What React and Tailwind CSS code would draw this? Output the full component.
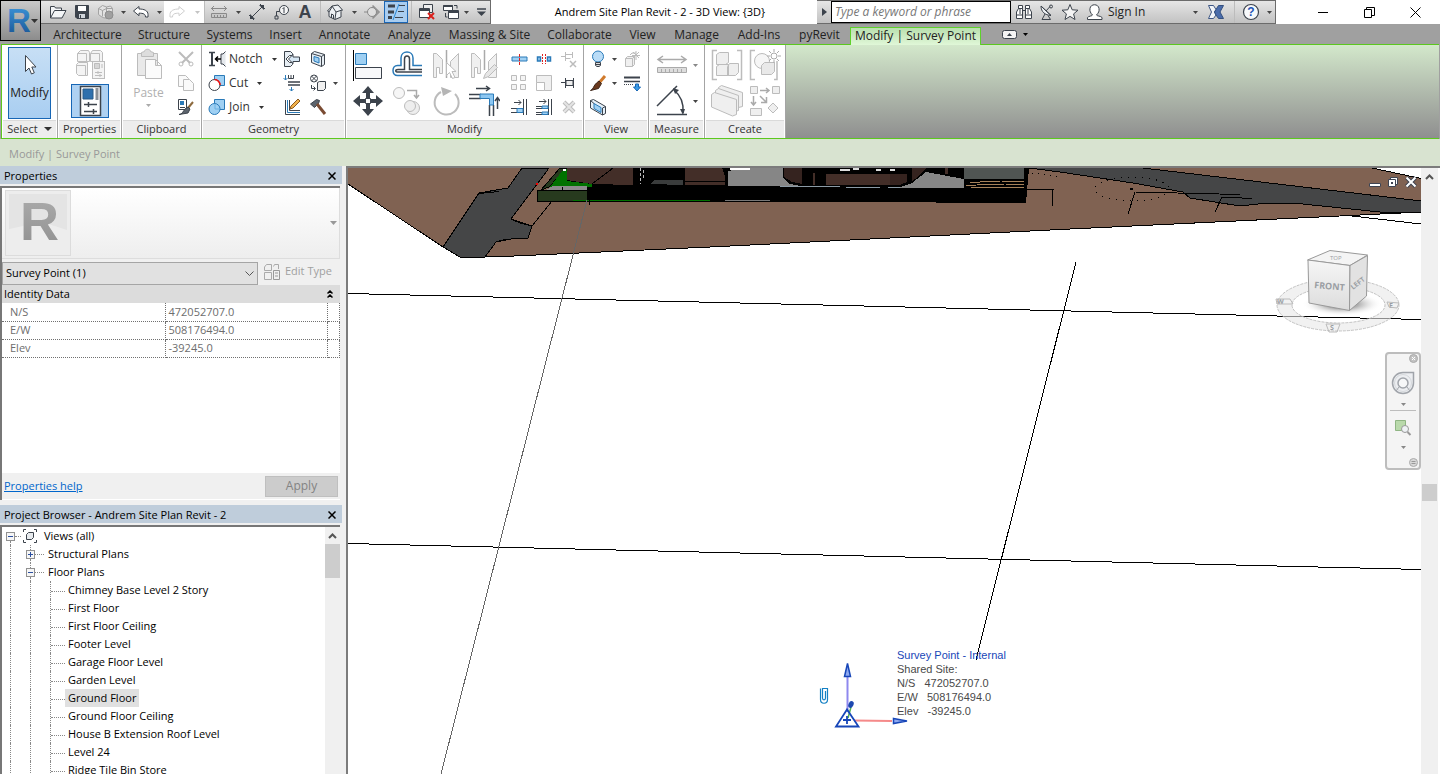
import React, { useState } from "react";

const tabs = [
  { name: "Architecture", width: "w-[85px]" },
  { name: "Structure", width: "w-[68px]" },
  { name: "Systems", width: "w-[63px]" },
  { name: "Insert", width: "w-[49px]" },
  { name: "Annotate", width: "w-[69px]" },
  { name: "Analyze", width: "w-[61px]" },
  { name: "Massing & Site", width: "w-[99px]" },
  { name: "Collaborate", width: "w-[81px]" },
  { name: "View", width: "w-[45px]" },
  { name: "Manage", width: "w-[63px]" },
  { name: "Add-Ins", width: "w-[62px]" },
  { name: "pyRevit", width: "w-[59px]" },
];

const properties = [
  { name: "N/S", value: "472052707.0" },
  { name: "E/W", value: "508176494.0" },
  { name: "Elev", value: "-39245.0" },
];

const floorPlans = [
  "Chimney Base Level 2 Story",
  "First Floor",
  "First Floor Ceiling",
  "Footer Level",
  "Garage Floor Level",
  "Garden Level",
  "Ground Floor",
  "Ground Floor Ceiling",
  "House B Extension Roof Level",
  "Level 24",
  "Ridge Tile Bin Store",
];

function Svg({ w = 18, h = w, className = "", children }) {
  return (
    <svg width={w} height={h} viewBox={`0 0 ${w} ${h}`} fill="none" stroke="#3c434c" className={`shrink-0 ${className}`} aria-hidden="true">
      {children}
    </svg>
  );
}

function Caret({ className = "text-[#444]" }) {
  return (
    <svg width="5" height="3" viewBox="0 0 5 3" className={`shrink-0 ${className}`} aria-hidden="true">
      <path d="M0 0h5L2.5 3z" fill="currentColor" />
    </svg>
  );
}

function Tool({ label, className = "", children }) {
  return (
    <button aria-label={label} className={`flex shrink-0 items-center justify-center ${className}`}>
      {children}
    </button>
  );
}

function Divider() {
  return <span className="ml-[3px] h-full w-px shrink-0 bg-[#bcbcbc]" />;
}

/* ---------- quick access toolbar ---------- */

function QuickAccess() {
  return (
    <div className="flex h-6 w-[450px] shrink-0 items-stretch border-t border-b border-r border-[#6b6b6b] bg-linear-to-b from-[#e6e6e6] to-[#c2c2c2] pl-[5px]">
      <Tool label="Open" className="w-6">
        <Svg>
          <path d="M1.500 15V3.500h4l1 1.500h6v2.500M1.500 15l4-7.500h11.500L13 15z" fill="#f3f5f7" />
        </Svg>
      </Tool>
      <Tool label="Save" className="w-6">
        <Svg>
          <path d="M2.500 2.500h13v13h-11.500l-1.500-1.500z" fill="#3c434c" />
          <path d="M5 3h8v5H5z" fill="#fff" stroke="none" />
          <path d="M6 11h6v4H6z" fill="#cfd4da" stroke="none" />
          <path d="M7.500 12v3" />
        </Svg>
      </Tool>
      <Tool label="Synchronize" className="w-6">
        <Svg>
          <path d="M1.500 5.500l4-3 4 1.500 4-1 2 2.500v6l-5 4-5-1-4-3z" fill="#e2e2e2" stroke="#a3a3a3" />
          <path d="M1.500 5.500l4 2 4-2 6 0M5.500 7.500v6M9.500 4v10" stroke="#a3a3a3" />
          <circle cx="12" cy="12" r="4" fill="#a0a0a0" stroke="#8d8d8d" />
        </Svg>
      </Tool>
      <Tool label="Synchronize options" className="w-[10px]"><Caret /></Tool>
      <Tool label="Undo" className="w-[26px]">
        <Svg>
          <path d="M1.500 8L7 3.500V6c5 0 9 1.500 9 5.500v2.500h-2.500c0-3-2-3.800-6.500-3.800v2.500z" fill="#fff" />
        </Svg>
      </Tool>
      <Tool label="Undo options" className="w-[10px]"><Caret /></Tool>
      <Tool label="Redo" className="w-[26px] bg-white">
        <Svg>
          <path d="M16.500 8L11 3.500V6c-5 0-9 1.500-9 5.500v2.500h2.500c0-3 2-3.800 6.500-3.800v2.500z" stroke="#cfcfcf" />
        </Svg>
      </Tool>
      <Tool label="Redo options" className="w-[14px] bg-white"><Caret className="text-[#c4c4c4]" /></Tool>
      <span className="w-px shrink-0 bg-[#bcbcbc]" />
      <Tool label="Measure" className="w-7">
        <Svg>
          <path d="M1 5.500h16M4 3L1.500 5.500 4 8M14 3l2.500 2.500L14 8" stroke="#8a8a8a" />
          <path d="M1.500 10.500h15v4h-15zM4.500 12v2M7.500 12v2M10.500 12v2M13.500 12v2" stroke="#8a8a8a" fill="#c9c9c9" />
        </Svg>
      </Tool>
      <Tool label="Measure options" className="w-[10px]"><Caret /></Tool>
      <Tool label="Aligned Dimension" className="w-7">
        <Svg>
          <path d="M4 14L14 4" />
          <path d="M2 16v-5l5 5zM16 2v5l-5-5z" fill="#3c434c" stroke="none" />
          <path d="M1 12l5 5M12 1l5 5" />
        </Svg>
      </Tool>
      <Tool label="Tag by Category" className="w-[22px]">
        <Svg>
          <path d="M3.500 13V8.500H7" />
          <path d="M2 13h3v3H2z" />
          <circle cx="11" cy="7" r="4.500" fill="#f6f6f6" />
          <path d="M9.500 6L11 4.500V10" />
        </Svg>
      </Tool>
      <Tool label="Text" className="w-6 text-[#3c434c]">
        <span className="font-['Liberation_Sans',sans-serif] text-[18px] leading-5 font-bold">A</span>
      </Tool>
      <Divider />
      <Tool label="Default 3D View" className="w-7">
        <Svg>
          <path d="M1.500 8L6 3l6-1 4.500 5L15 8.500V14l-6 2.500-6-3V9z" fill="#eef1f4" />
          <path d="M6 3l4 6-1 7M10 9l6-2M3 9l3-5M5.500 15v-4l2 1v4" />
        </Svg>
      </Tool>
      <Tool label="3D view options" className="w-[10px]"><Caret /></Tool>
      <Tool label="Section" className="w-[25px]">
        <Svg>
          <path d="M1 9h3" stroke="#888" />
          <path d="M10 2.500L16.500 9 10 15.500z" fill="#999" stroke="#888" />
          <circle cx="9" cy="9" r="4.500" fill="#dedede" stroke="#888" />
        </Svg>
      </Tool>
      <Tool label="Thin Lines" className="w-6 border border-[#1b66b5] bg-[#a9cdf0]">
        <Svg>
          <path d="M1 3h7M1 9h6M1 14.500h4" strokeWidth="3" />
          <path d="M12 2.500h6M11 8.500h6M8 14.500h8" />
          <path d="M12 1L6 17" stroke="#2a8ad8" />
        </Svg>
      </Tool>
      <Divider />
      <Tool label="Close Inactive Views" className="w-[30px]">
        <Svg>
          <path d="M5.500 6V1.500h9v8H12" fill="#eee" />
          <path d="M1.500 5.500h10v9h-10z" fill="#fff" />
          <path d="M1.500 7h10" strokeWidth="2" />
          <path d="M10 10l6 6M16 10l-6 6" stroke="#d9201c" strokeWidth="2" />
        </Svg>
      </Tool>
      <Tool label="Switch Windows" className="w-[18px]">
        <Svg>
          <path d="M1.500 2.500h9v5h-9z" fill="#fff" />
          <path d="M6.500 7.500h10v8h-10z" fill="#fff" />
          <path d="M1.500 3h9M6.500 9h10" strokeWidth="2" />
          <path d="M12 2.500h3v3M3.500 10v4h2" />
        </Svg>
      </Tool>
      <Tool label="Switch window options" className="w-3"><Caret /></Tool>
      <Tool label="Customize" className="w-[18px]">
        <Svg w={9} h={8}>
          <path d="M0 1h9" strokeWidth="1.500" />
          <path d="M0 3.500h9L4.500 8z" fill="#3c434c" stroke="none" />
        </Svg>
      </Tool>
    </div>
  );
}

function InfoCenter() {
  return (
    <div className="flex h-6 w-[459px] shrink-0 items-stretch border-t border-b border-r border-[#6b6b6b] bg-linear-to-b from-[#e6e6e6] to-[#c2c2c2]">
      <Tool label="Collapse search" className="w-[14px]">
        <Svg w={5} h={8}>
          <path d="M0 0l5 4-5 4z" fill="#3c434c" stroke="none" />
        </Svg>
      </Tool>
      <input
        aria-label="Search"
        placeholder="Type a keyword or phrase"
        className="w-[180px] shrink-0 border border-black bg-white px-[3px] text-[12px] leading-4 italic placeholder-[#777]"
      />
      <Tool label="Search" className="w-[26px]">
        <Svg>
          <path d="M3.500 6V2.500h4V6M10.500 6V2.500h4V6" fill="#fff" />
          <path d="M1.500 15.500V9l2-3.500h4v10zM10.500 15.500v-10h4l2 3.500v6.500z" fill="#fff" />
          <path d="M7.500 7.500h3M1.500 12h6M10.500 12h6M5 6v5M13 6v5" />
        </Svg>
      </Tool>
      <Tool label="Communication Center" className="w-5">
        <Svg>
          <path d="M3 3c0 6 4 9 10 9.500z" fill="#eef1f4" />
          <path d="M3 3l10 9.500M8 8l4-4.500" />
          <circle cx="13" cy="3.500" r="1.500" />
          <path d="M7 11l-3 5.500h8.500L10 12.500" />
        </Svg>
      </Tool>
      <Tool label="Favorites" className="w-[26px]">
        <Svg>
          <path d="M9 1.500l2.200 5.300 5.800.4-4.400 3.700 1.400 5.600L9 13.400l-5 3.100 1.400-5.600L1 7.200l5.800-.4z" fill="#f4f4f4" />
        </Svg>
      </Tool>
      <button className="flex w-[106px] shrink-0 items-center gap-1 pl-[3px] text-[12px] whitespace-nowrap text-[#222]">
        <Svg>
          <path d="M1.500 16.500v-2c1-1.500 5-1.500 5-2.500-2-2-3-4-2.500-6.500.5-5 8.500-5 9 0 .5 2.500-.5 4.500-2.500 6.500 0 1 4.500 1 5.500 2.500v2z" fill="#fff" />
        </Svg>
        Sign In
      </button>
      <Tool label="Account menu" className="w-3"><Caret /></Tool>
      <Tool label="App Store" className="w-[30px]">
        <Svg>
          <path d="M1.500 2.500h5L9 6.500l-1.500 2.500L9 12l-2.500 3.500h-5L4.500 9z" fill="#f1f4f8" stroke="#3d5685" />
          <path d="M16.500 2.500h-5L9 6.500 7.500 9 9 12l2.500 3.500h5L13 9z" fill="#4a6cab" stroke="#34507f" />
        </Svg>
      </Tool>
      <Divider />
      <Tool label="Help" className="ml-1 w-6">
        <Svg>
          <circle cx="9" cy="9" r="7.500" fill="#f7f9fb" strokeWidth="1.200" />
          <text x="9" y="13" textAnchor="middle" fontSize="12" fontWeight="700" fill="#2353b5" stroke="none" fontFamily="Liberation Sans, sans-serif">?</text>
        </Svg>
      </Tool>
      <Tool label="Help options" className="w-3"><Caret /></Tool>
    </div>
  );
}

function TitleBar() {
  return (
    <div className="flex h-6 bg-white pl-[41px]">
      <QuickAccess />
      <div className="flex min-w-0 flex-1 items-center justify-center pl-3 text-[11px] whitespace-nowrap text-black">
        Andrem Site Plan Revit - 2 - 3D View: &#123;3D&#125;
      </div>
      <InfoCenter />
      <div className="flex pr-[2px] pl-6">
        <Tool label="Minimize" className="w-[46px]">
          <Svg w={11}><path d="M0 5.500h10" stroke="#000" /></Svg>
        </Tool>
        <Tool label="Restore" className="w-[46px]">
          <Svg w={11}><path d="M.5 2.500h7v8h-7zM2.500 2.500v-2h8v8h-3" stroke="#000" /></Svg>
        </Tool>
        <Tool label="Close" className="w-[46px]">
          <Svg w={11}><path d="M.5.5l10 10M10.500.5l-10 10" stroke="#000" /></Svg>
        </Tool>
      </div>
    </div>
  );
}

function TabRow() {
  return (
    <div className="flex h-5 items-stretch bg-[#a0a0a0] pl-[45px] text-[12px] text-[#222]">
      {tabs.map((tab) => (
        <button key={tab.name} className={`flex shrink-0 items-center justify-center pt-[2px] whitespace-nowrap ${tab.width}`}>
          {tab.name}
        </button>
      ))}
      <button className="mt-[3px] -mb-px ml-px flex w-[131px] shrink-0 items-center justify-center border border-b-0 border-[#5fd12c] bg-linear-to-b from-[#b9dfae] to-[#e0f7d8] pb-[2px] whitespace-nowrap">
        Modify | Survey Point
      </button>
      <Tool label="Ribbon display" className="ml-[21px] gap-[6px]">
        <Svg w={15} h={9}>
          <rect x=".5" y=".5" width="14" height="8" rx="2" fill="#f4f4f4" />
          <path d="M5 6l2.500-3L10 6z" fill="#3c434c" stroke="none" />
        </Svg>
        <Caret className="text-black" />
      </Tool>
    </div>
  );
}

/* ---------- ribbon ---------- */

function Panel({ title, className = "", pad = "px-[6px]", menu, children }) {
  return (
    <section className={`flex shrink-0 flex-col border-r border-[#a4a4a4] bg-white ${className}`}>
      <div className={`flex flex-1 pt-[2px] ${pad}`}>{children}</div>
      <h2 className="mx-px flex h-[18px] items-center justify-center gap-[6px] border-t border-[#dadada] bg-[#ededed] pb-px text-[11px] text-[#333]">
        {title}
        {menu && (
          <Svg w={8} h={4}><path d="M0 0h8L4 4z" fill="#333" stroke="none" /></Svg>
        )}
      </h2>
    </section>
  );
}

function GhostFamily() {
  return (
    <Svg w={32}>
      <g fill="#f4f4f4" stroke="#bdbdbd">
        <path d="M3.500 5.500l3-3h8l1 2v9h-12zM16.500 5.500l2-3h8l2 2v9h-12zM2.500 16.500l2-2h9v13h-9l-2-2z" />
        <path d="M3.500 5.500h9v8M16.500 5.500h9v8M2.500 17.500h9v10" />
        <rect x="18.500" y="13.500" width="12" height="17" />
        <path d="M20.500 15.500h5v5h-5z" fill="#d6d6d6" />
        <path d="M28 16v4M21 24.500h7M24 23v3M21 27.500h7M26 26v3" />
      </g>
    </Svg>
  );
}

const gray = "#bcbcbc";
const blue = "#2a7ab8";
const sky = "#9fd0f3";

function Ribbon() {
  return (
    <div className="flex h-[95px] items-stretch border-t border-b border-l border-[#5cc81e] bg-linear-to-b from-[#d3e8cb] to-[#8f8f8f]">
      <Panel title="Select" menu className="w-14">
        <button className="flex h-[72px] w-11 flex-col items-center border border-[#1766b5] bg-linear-to-b from-[#c7dff5] to-[#a9cef1] pt-[6px] text-[12px] text-[#222]">
          <Svg w={14} h={22}>
            <path d="M2.500 1.500v16l3.500-3.500 2.500 6 2.800-1.200-2.500-5.800H13z" fill="#fff" />
          </Svg>
          <span className="mt-[9px] leading-4">Modify</span>
        </button>
      </Panel>

      <Panel title="Properties" className="w-16">
        <div className="flex flex-1 flex-col items-center gap-[4px] pt-px">
          <Tool label="Type Properties"><GhostFamily /></Tool>
          <Tool label="Properties" className="h-[34px] w-[38px] border border-[#1766b5] bg-[#aed1f2]">
            <Svg w={32}>
              <rect x="6.500" y="1.500" width="20" height="29" fill="#fff" strokeWidth="1.500" />
              <path d="M9 4h10v10H9z" fill="#2f70ad" stroke="#2b5a86" />
              <path d="M23 3v12" stroke="#8c9197" strokeWidth="3" />
              <path d="M10 19.500h13M10 26.500h13M14.500 17v5M19.500 24v5" strokeWidth="1.500" />
            </Svg>
          </Tool>
        </div>
      </Panel>

      <Panel title="Clipboard" className="w-20">
        <button className="flex w-[42px] flex-col items-center text-[12px] text-[#b0b0b0]">
          <Svg w={32} h={36}>
            <g stroke={gray} fill="#f1f1f1">
              <path d="M4.500 6.500h20v22h-20z" fill="#e9e9e9" />
              <path d="M8.500 5.500l3-1c0-3 6-3 6 0l3 1v4h-12z" fill="#ddd" />
              <path d="M12.500 12.500h10l6 6v13h-16zM22.500 12.500v6h6" fill="#fbfbfb" />
            </g>
          </Svg>
          <span className="mt-[2px] leading-4">Paste</span>
          <Caret className="mt-[3px] text-[#aaa]" />
        </button>
        <div className="ml-2 flex flex-col gap-[6px] pt-[3px]">
          <Tool label="Cut to Clipboard">
            <Svg>
              <path d="M2 2l11 11M16 2L5 13" stroke={gray} strokeWidth="2" />
              <circle cx="4" cy="14" r="2" stroke={gray} />
              <circle cx="14" cy="14" r="2" stroke={gray} />
            </Svg>
          </Tool>
          <Tool label="Copy to Clipboard">
            <Svg>
              <path d="M1.500 1.500h7l3 3v8h-10z" stroke={gray} fill="#fafafa" />
              <path d="M6.500 5.500h6l4 4v7h-10z" stroke={gray} fill="#fafafa" />
            </Svg>
          </Tool>
          <Tool label="Match Type Properties">
            <Svg>
              <path d="M1.500 1.500h8v10h-8z" fill="#fff" />
              <path d="M3 3h4v4H3z" fill={blue} stroke="none" />
              <path d="M3 9.500h5" />
              <path d="M16 4l-5 6" stroke="#8d6a3e" strokeWidth="2" />
              <path d="M11 9l2 2-2 4-9 1.500c3 0 4-3 6-5.500z" fill="#5c646d" />
            </Svg>
          </Tool>
        </div>
      </Panel>

      <Panel title="Geometry" className="w-36">
        <div className="flex w-[73px] shrink-0 flex-col gap-[6px] pt-[3px] text-[12px] leading-[18px] text-[#333]">
          <button className="flex items-center gap-[3px]">
            <Svg>
              <path d="M1 2.500h6M1 15.500h6" strokeWidth="1.500" />
              <path d="M4 3v12" strokeWidth="2" />
              <path d="M17.500 1.500L15 4h-2v10h2l2.500 2.500" fill="#e4e8ec" />
              <path d="M13 9H8M10 6.500L7.500 9l2.500 2.500" stroke="#000" strokeWidth="1.500" />
            </Svg>
            Notch
            <Caret className="ml-[6px]" />
          </button>
          <button className="flex items-center gap-[3px]">
            <Svg>
              <path d="M6.500 1.500h10v10h-10z" fill={sky} stroke={blue} />
              <circle cx="6.500" cy="11" r="5.500" fill="#fff" />
              <path d="M6.500 5.500a5.500 5.500 0 0 1 5.500 5.500" stroke="#e11" strokeWidth="1.500" />
            </Svg>
            Cut
            <Caret className="ml-[6px]" />
          </button>
          <button className="flex items-center gap-[3px]">
            <Svg>
              <path d="M6.500 1.500h10v10h-10z" fill={sky} stroke={blue} />
              <circle cx="6.500" cy="11" r="5.500" fill={sky} stroke={blue} />
              <path d="M7 6v5h5" stroke="#6bb0e0" />
            </Svg>
            Join
            <Caret className="ml-[6px]" />
          </button>
        </div>
        <div className="ml-[2px] flex flex-col gap-[6px] pt-[3px]">
          <Tool label="Cope">
            <Svg>
              <path d="M1.500 1.500h6l2 2v2h-3L3 9l3.500 3.500h3v2l-2 2h-6z" fill="#e7eef4" />
              <path d="M5.500 9L10 4.500v2.500h6.500v4.500H10v2z" fill="#d6e6f3" />
            </Svg>
          </Tool>
          <Tool label="Wall Joins">
            <Svg>
              <path d="M2.500 1v5M.5 4l2 2 2-2M8.500 17v-4M6.500 15l2 2 2-2" stroke={blue} />
              <path d="M5.500 1v3.500h5V1M8 1v3.500" />
              <path d="M5 8h12M5 11h12" strokeWidth="1.500" />
            </Svg>
          </Tool>
          <Tool label="Split Face">
            <Svg>
              <path d="M2.500 2v14.500H17M6.500 2v10.500H17" />
              <path d="M4.500 2v12.500H17" stroke={blue} />
              <path d="M7 11l1-3 7-7 2 2-7 7z" fill="#f2b24b" stroke="#8d5a1e" />
            </Svg>
          </Tool>
        </div>
        <div className="ml-2 flex flex-col gap-[6px] pt-[3px]">
          <Tool label="Paint">
            <Svg>
              <path d="M2.500 3.500l3-2 10 3v10l-3 2-10-4z" fill="#e7eef4" />
              <path d="M2.500 3.500l10 3v10M12.500 6.500l3-2" />
              <path d="M5 6.500l5 1.500v5l-5-2z" fill={sky} stroke={blue} />
            </Svg>
          </Tool>
          <Tool label="Beam Joins">
            <Svg>
              <circle cx="5" cy="4.500" r="3.500" />
              <path d="M2.500 2l5 5M7.500 2l-5 5M2.500 11v3.500H6M4.500 12.500l2 2-2 2" />
              <path d="M8.500 8.500l2-1h6v7l-2 2h-6z" fill="#f0f0f0" />
            </Svg>
          </Tool>
          <Tool label="Demolish">
            <Svg>
              <path d="M1.500 6l6-4.500 3 1-1 3-4 4z" fill="#5c646d" />
              <path d="M8 6l8 10" stroke="#7a4b32" strokeWidth="3" />
            </Svg>
          </Tool>
        </div>
        <Tool label="More geometry" className="ml-[2px] h-3 w-3 self-center"><Caret /></Tool>
      </Panel>

      <Panel title="Modify" className="w-[238px]" pad="px-[2px]">
        <div className="grid grid-cols-[39px_39px_39px_38px] grid-rows-[36px_36px]">
          <Tool label="Align">
            <Svg w={32}>
              <path d="M1.500 1v31" stroke="#000" />
              <path d="M3.500 4.500h11v11h-11z" fill={sky} stroke={blue} />
              <path d="M3.500 18.500h26v11h-26z" fill="#f7f8fa" />
            </Svg>
          </Tool>
          <Tool label="Offset">
            <Svg w={32}>
              <path d="M31 16.500h-9V9c0-8-12-8-12 0v7.500H6.500c-6 0-6 10 0 10H31" stroke={blue} strokeWidth="1.500" />
              <path d="M31 20.500H18.500V10c0-4-5-4-5 0v10.500H7c-3 0-3 2.500 0 2.500h24" strokeWidth="1.500" />
            </Svg>
          </Tool>
          <Tool label="Mirror - Pick Axis">
            <Svg w={32}>
              <path d="M3.500 4.500h3l6 6v14h-3v-6h-3v10h-3zM28.500 4.500l-8 8v16h8z" stroke={gray} fill="#f0f0f0" />
              <path d="M16.500 1v28" stroke="#aaa" strokeWidth="1.500" />
              <path d="M16.500 13.500v13l3-3 3 6 2.500-1-3-6h4z" fill="#fff" stroke={gray} />
            </Svg>
          </Tool>
          <Tool label="Mirror - Draw Axis">
            <Svg w={32}>
              <path d="M3.500 4.500h3l6 6v14h-3v-6h-3v10h-3zM28.500 4.500l-8 8v16h8z" stroke={gray} fill="#f0f0f0" />
              <path d="M16.500 1v20" stroke="#aaa" strokeWidth="1.500" />
              <path d="M15.500 29.500l2-5 9-9 3 3-9 9z" fill="#e6e6e6" stroke={gray} />
            </Svg>
          </Tool>
          <Tool label="Move">
            <Svg w={32}>
              <path d="M16 1l6 7h-4v5h-4V8h-4zM16 31l6-7h-4v-5h-4v5h-4zM1 16l7-6v4h5v4H8v4zM31 16l-7-6v4h-5v4h5v4z" fill="#3c434c" stroke="none" />
              <path d="M13.500 13.500h5v5h-5z" fill="#fff" />
            </Svg>
          </Tool>
          <Tool label="Copy">
            <Svg w={32}>
              <circle cx="8" cy="8" r="5.500" stroke={gray} fill="#f6f6f6" />
              <circle cx="22" cy="23" r="6.500" stroke={gray} fill="#eee" />
              <circle cx="19" cy="21" r="5.500" stroke={gray} fill="#eee" />
              <path d="M16 5.500h9.500V12M23 10l2.500 3 2.500-3" stroke="#aaa" strokeWidth="1.500" />
            </Svg>
          </Tool>
          <Tool label="Rotate">
            <Svg w={32}>
              <path d="M11 7A12 12 0 1 0 25 9" stroke={gray} strokeWidth="2" />
              <path d="M11 2l11 4-9 5z" fill="#b5b5b5" stroke="none" />
            </Svg>
          </Tool>
          <Tool label="Trim/Extend to Corner">
            <Svg w={32}>
              <path d="M1 9.500h12M1 13.500h12M21.500 20v11M25.500 20v11" strokeWidth="1.500" />
              <path d="M12 9h13.500v11h-4v-6.500H12z" fill="#8cc7f2" stroke={blue} />
              <path d="M8 3.500h13M18 1l3.500 2.500L18 6M29.500 24V13M27 16l2.500-3.500L32 16" strokeWidth="1.500" />
            </Svg>
          </Tool>
        </div>
        <div className="ml-[3px] grid grid-cols-[25px_25px_25px] grid-rows-[24px_24px_24px]">
          <Tool label="Split Element">
            <Svg>
              <path d="M2 7h15v4H2z" fill={sky} stroke={blue} />
              <path d="M9.500 4v11" stroke="#d22" strokeDasharray="3 1" />
            </Svg>
          </Tool>
          <Tool label="Split with Gap">
            <Svg>
              <path d="M2.500 7h3v4h-3zM12.500 7h3v4h-3z" fill={sky} stroke={blue} strokeWidth="1.500" />
              <path d="M7.500 4v10M10.500 4v10" stroke="#d22" strokeDasharray="2 1" />
            </Svg>
          </Tool>
          <Tool label="Unpin">
            <Svg>
              <path d="M1 6.500h4M5.500 2v9M5.500 4.500h7M5.500 8.500h5M12.500 2v6" stroke={gray} />
              <path d="M10 11l6 6M16 11l-6 6" stroke={gray} strokeWidth="1.500" />
            </Svg>
          </Tool>
          <Tool label="Array">
            <Svg>
              <path d="M1.500 1.500h5v5h-5zM10.500 1.500h5v5h-5zM1.500 10.500h5v5h-5zM10.500 10.500h5v5h-5z" stroke={gray} fill="#f4f4f4" />
            </Svg>
          </Tool>
          <Tool label="Scale">
            <Svg>
              <path d="M1.500 1.500h15v15h-7v-8h-8z" stroke={gray} fill="#f0f0f0" />
              <path d="M1.500 8.500h8v8h-8z" stroke={gray} fill="#fff" />
            </Svg>
          </Tool>
          <Tool label="Pin">
            <Svg>
              <path d="M1 8.500h4M5.500 4v10M13.500 4v10" />
              <path d="M6 6.500h7v5H6z" fill="#eee" />
            </Svg>
          </Tool>
          <Tool label="Trim/Extend Single Element">
            <Svg>
              <path d="M1 10.500h8M1 14.500h8M4 4.500h7M8.500 2L11 4.500 8.500 7M13.500 1v16M16.500 1v16" />
              <path d="M7 10.500h6v4H7z" fill={sky} stroke={blue} />
            </Svg>
          </Tool>
          <Tool label="Trim/Extend Multiple Elements">
            <Svg>
              <path d="M4 3.500h7M8.500 1L11 3.500 8.500 6M1 8.500h7M1 10.500h7M1 14.500h7M1 16.500h7M13.500 1v16M16.500 1v16" />
              <path d="M7 8h6v2.500H7zM7 14h6v2.500H7z" fill={sky} stroke={blue} />
            </Svg>
          </Tool>
          <Tool label="Delete">
            <Svg>
              <path d="M4 4l10 10M14 4L4 14" stroke={gray} strokeWidth="4" />
              <path d="M4 4l10 10M14 4L4 14" stroke="#e4e4e4" strokeWidth="2" />
            </Svg>
          </Tool>
        </div>
      </Panel>

      <Panel title="View" className="w-[65px]">
        <div className="grid grid-cols-[16px_16px_20px] grid-rows-[24px_24px_24px]">
          <Tool label="Hide in View">
            <Svg>
              <circle cx="9" cy="6.500" r="5.500" fill="#b9dcf7" stroke={blue} />
              <path d="M6.500 12.500h5v3l-1.500 1h-2l-1.500-1zM6.500 14.500h5" fill="#ddd" />
            </Svg>
          </Tool>
          <Tool label="Hide options"><Caret /></Tool>
          <Tool label="Displace Elements">
            <Svg>
              <path d="M2.500 8.500l2-2h7v8l-2 2h-7zM2.500 8.500h7v8M9.500 8.500l2-2M7 5l2-2h4" stroke={gray} fill="#f0f0f0" />
              <path d="M13 1v9M9 5.500h8M10 2l6 6M16 2l-6 6" stroke={gray} />
            </Svg>
          </Tool>
          <Tool label="Override Graphics">
            <Svg>
              <path d="M16 2l-6 7" stroke="#d07a2d" strokeWidth="3" />
              <path d="M10 7l2.500 2.500-3 5L1.500 16.500c3-1 3-5 6-7.500z" fill="#6b3a1e" stroke="#3c2417" />
            </Svg>
          </Tool>
          <Tool label="Override options"><Caret /></Tool>
          <Tool label="Linework">
            <Svg>
              <path d="M1 3.500h16" strokeWidth="2" />
              <path d="M1 7.500h16" strokeWidth="1.500" />
              <path d="M1 10.500h10" strokeDasharray="1 1" />
              <path d="M12.500 10h3v3h2L14 17l-3.500-4h2z" fill="#3a9be6" stroke="#1766b5" />
            </Svg>
          </Tool>
          <Tool label="Selection Box">
            <Svg>
              <path d="M1.500 2.500l3-1 12 7v7l-3 1.500-12-7z" fill="#e6f1fa" />
              <path d="M5 5.500l7 4v5l-7-4z" fill={sky} stroke={blue} />
              <path d="M1.500 2.500l3.500 3M13.500 10v7M13.500 10l3-1.500" />
            </Svg>
          </Tool>
        </div>
      </Panel>

      <Panel title="Measure" className="w-14">
        <div className="grid grid-cols-[33px_15px] grid-rows-[36px_36px]">
          <Tool label="Measure Between Two References">
            <Svg w={32}>
              <path d="M3 10.500h26M7 7l-5 3.500L7 14M25 7l5 3.500-5 3.500" stroke="#aaa" strokeWidth="1.500" />
              <path d="M1.500 18.500h29v5h-29zM5.500 20v3M9.500 20v3M13.500 20v3M17.500 20v3M21.500 20v3M25.500 20v3" stroke="#aaa" fill="#ddd" />
            </Svg>
          </Tool>
          <Tool label="Measure options"><Caret className="text-[#888]" /></Tool>
          <Tool label="Angular Dimension">
            <Svg w={32}>
              <path d="M1 21L21 1M1 29.500h30" strokeWidth="1.500" />
              <path d="M18 5c6 5 10 13 9 23" strokeWidth="1.500" />
              <path d="M17 3l6 2-4 4zM24 24h5l-2 6z" fill="#3c434c" stroke="none" />
            </Svg>
          </Tool>
          <Tool label="Dimension options"><Caret /></Tool>
        </div>
      </Panel>

      <Panel title="Create" className="w-[81px]" pad="px-[5px]">
        <div className="grid grid-cols-[34px_42px] grid-rows-[36px_36px]">
          <Tool label="Create Assembly">
            <Svg w={32}>
              <path d="M6 1.500H1.500v29H6M26 1.500h4.500v29H26" stroke={gray} strokeWidth="1.500" />
              <path d="M5.500 5.500l3-2h9v10l-3 2h-9zM5.500 17.500l3-2h9v11h-12zM16.500 17.500l2-3h9v9l-3 3h-8z" stroke={gray} fill="#efefef" />
            </Svg>
          </Tool>
          <Tool label="Create Group">
            <Svg w={32}>
              <path d="M6 1.500H1.500v29H6M28 12v18.500h-3" stroke={gray} strokeWidth="1.500" />
              <circle cx="13" cy="12" r="7.500" stroke={gray} fill="#f6f6f6" />
              <path d="M12.500 16.500l3-3h10v9l-3 3h-10z" stroke={gray} fill="#e9e9e9" />
              <circle cx="25" cy="7" r="3" stroke="#aaa" fill="#fff" />
              <path d="M25 0v3M25 11v3M18 7h3M29 7h3M20 2l2 2M28 10l2 2M30 2l-2 2M22 10l-2 2" stroke="#aaa" />
            </Svg>
          </Tool>
          <Tool label="Create Parts">
            <Svg w={32}>
              <g stroke={gray} fill="#efefef">
                <path d="M7.500 2.500l3-2 21 7v14l-4 1-20-8z" />
                <path d="M4.500 5.500l3-2 20 7v15l-4 1-19-8z" />
                <path d="M.5 9.500l3-2 22 7v15l-4 1.500-21-9z" />
              </g>
            </Svg>
          </Tool>
          <Tool label="Create Similar">
            <Svg w={32}>
              <path d="M1.500 1.500h7v7h-7zM23.500 1.500h7v7h-7zM1.500 23.500h11v7h-11zM24 18l5 5-5 5-5-5z" stroke={gray} fill="#efefef" />
              <path d="M11 5.500h9M17 3l3 2.500L17 8M4.500 11v9M2 17l2.500 3L7 17M11 11l6 6M17.500 12v5.500H12" stroke="#aaa" strokeWidth="1.500" />
            </Svg>
          </Tool>
        </div>
      </Panel>
    </div>
  );
}

/* ---------- left dock ---------- */

function DockTitle({ children }) {
  return (
    <div className="flex h-[18px] shrink-0 items-center justify-between bg-[#bfcddb] pt-px pr-[6px] pl-1 text-[11px] leading-4 text-black">
      <h2>{children}</h2>
      <button aria-label={`Close ${children}`}>
        <Svg w={8}><path d="M.5.500l7 7M7.500.5l-7 7" stroke="#000" strokeWidth="1.500" /></Svg>
      </button>
    </div>
  );
}

function PropertiesPalette() {
  return (
    <section className="flex h-[334px] shrink-0 flex-col">
      <DockTitle>Properties</DockTitle>
      <div className="mt-[2px] mr-[2px] flex flex-1 flex-col border-t-2 border-l-2 border-[#777] bg-[#f0f0f0]">
        <button aria-label="Type selector" className="mb-[2px] flex h-[71px] items-center justify-between border-r border-b border-[#ddd] bg-linear-to-b from-white to-[#eeeeee] pr-[2px] pl-[3px]">
          <span className="border border-[#dcdcdc] bg-[#ededed]">
            <Svg w={64}>
              <defs>
                <linearGradient id="ghostR" x1="0" y1="0" x2="0" y2="1">
                  <stop offset="0" stopColor="#adadad" />
                  <stop offset="1" stopColor="#8f8f8f" />
                </linearGradient>
              </defs>
              <path d="M3 3h58v36L36 31 3 38z" fill="#e4e4e4" stroke="none" />
              <text x="14" y="49" fontSize="54" fontWeight="700" fill="url(#ghostR)" stroke="none" fontFamily="Liberation Sans, sans-serif">R</text>
            </Svg>
          </span>
          <Svg w={7} h={4}><path d="M0 0h7L3.500 4z" fill="#999" stroke="none" /></Svg>
        </button>
        <div className="flex h-6 items-center">
          <div className="relative h-[23px] w-64">
            <select aria-label="Element filter" className="h-full w-full appearance-none border border-[#a5a5a5] bg-[#e1e1e1] pl-[3px] text-[11px] leading-4 text-black">
              <option>Survey Point (1)</option>
            </select>
            <Svg w={9} h={6} className="pointer-events-none absolute top-[9px] right-[4px]">
              <path d="M.5.500l4 4 4-4" stroke="#555" />
            </Svg>
          </div>
          <button className="ml-[6px] flex items-center gap-[5px] pb-[3px] text-[11px] text-[#a0a0a0]">
            <Svg w={16}>
              <path d="M.5 3l2-2.500h5v6h-7zM9.500 2.500l1-2h4V5M.5 8.500h7v7h-7zM7.500 6V1.500" stroke="#aaa" />
              <path d="M9.500 6.500h6v9h-6zM11 9h3M11 12h3" stroke="#999" />
            </Svg>
            Edit Type
          </button>
        </div>
        <div className="flex h-[18px] items-center justify-between bg-[#dcdcdc] pr-[7px] pl-[2px] text-[11px] text-black">
          <h3>Identity Data</h3>
          <button aria-label="Collapse Identity Data">
            <Svg w={6} h={8}><path d="M.5 3.500L3 1l2.500 2.500M.5 7.500L3 5l2.500 2.500" stroke="#000" strokeWidth="1.500" /></Svg>
          </button>
        </div>
        <div className="flex-1 bg-white">
          <table className="w-full table-fixed border-collapse text-[11px] text-[#6d6d6d]">
            <tbody>
              {properties.map((property) => (
                <tr key={property.name} className="h-[18px]">
                  <th className="w-[163px] border-r border-b border-dotted border-[#707070] py-0 pl-2 text-left leading-4 font-normal">{property.name}</th>
                  <td className="border-r border-b border-dotted border-[#707070] py-0 pl-[3px] leading-4">{property.value}</td>
                  <td className="w-3 border-r border-b border-dotted border-[#707070] p-0" />
                </tr>
              ))}
            </tbody>
          </table>
        </div>
        <div className="flex h-[27px] items-center justify-between border-b border-white pr-[2px] pl-[2px] text-[11px]">
          <a href="#help" className="text-[#0066cc] underline">Properties help</a>
          <button className="h-[21px] w-[73px] border border-[#bfbfbf] bg-[#cccccc] text-[12px] text-[#838383]">Apply</button>
        </div>
      </div>
    </section>
  );
}

function Expander({ open, root }) {
  return (
    <span className="flex h-full w-[9px] shrink-0 flex-col items-center">
      <span className={root ? "flex-1" : "w-px flex-1 border-l border-dotted border-[#888]"} />
      <Svg w={9}>
        <rect x=".5" y=".5" width="8" height="8" fill="#f6f6f6" stroke="#919191" />
        <path d="M2 4.500h5" stroke="#2b4fa0" />
        {!open && <path d="M4.500 2v5" stroke="#2b4fa0" />}
      </Svg>
      <span className="w-px flex-1 border-l border-dotted border-[#888]" />
    </span>
  );
}

function ProjectBrowser() {
  const [selected, setSelected] = useState("Ground Floor");

  return (
    <section className="mt-[5px] flex min-h-0 flex-1 flex-col">
      <DockTitle>Project Browser - Andrem Site Plan Revit - 2</DockTitle>
      <div className="mt-[2px] mr-[2px] flex min-h-0 flex-1 border-t-2 border-l-2 border-[#777] bg-white">
        <ul className="min-w-0 flex-1 overflow-hidden text-[11px] leading-[18px] text-black">
          <li className="flex h-[18px] items-center pl-1">
            <Expander open root />
            <span className="w-[6px] border-b border-dotted border-[#888]" />
            <Svg w={16} className="mx-px">
              <path d="M4 1.500H1.500V4M12 1.500h2.500V4M4 14.500H1.500V12M12 14.500h2.500V12" />
              <path d="M4.500 6.500l2-2h5v5l-2 2h-5z" fill="#e8ebee" />
            </Svg>
            <span className="pl-[5px]">Views (all)</span>
          </li>
          {["Structural Plans", "Floor Plans"].map((name) => (
            <li key={name} className="flex h-[18px] items-center pl-2">
              <span className="h-full w-4 shrink-0 border-l border-dotted border-[#888]" />
              <Expander open={name === "Floor Plans"} />
              <span className="w-[9px] border-b border-dotted border-[#888]" />
              <span className="pl-1">{name}</span>
            </li>
          ))}
          {floorPlans.map((plan) => (
            <li key={plan} className="flex h-[18px] pl-2">
              <span className="w-5 shrink-0 border-l border-dotted border-[#888]" />
              <span className="w-5 shrink-0 border-l border-dotted border-[#888]" />
              <span className="w-[15px] shrink-0 border-l border-dotted border-[#888]">
                <span className="block h-[11px] border-b border-dotted border-[#888]" />
              </span>
              <button onClick={() => setSelected(plan)} className={`px-[3px] whitespace-nowrap ${plan === selected ? "bg-[#e0e0e0]" : ""}`}>
                {plan}
              </button>
            </li>
          ))}
        </ul>
        <div className="flex w-[15px] shrink-0 flex-col items-center bg-[#f0f0f0]">
          <Tool label="Scroll up" className="h-[17px]">
            <Svg w={9} h={6}><path d="M1 5l3.500-3.500L8 5" stroke="#555" strokeWidth="2" /></Svg>
          </Tool>
          <span className="h-[34px] w-full bg-[#cdcdcd]" />
        </div>
      </div>
    </section>
  );
}

/* ---------- 3D view ---------- */

// The scene is plotted in window coordinates, its origin is the corner of the view
function Scene() {
  return (
    <svg viewBox="348 168 1073 606" preserveAspectRatio="xMinYMin slice" className="absolute inset-0 h-full w-full" fill="none" aria-hidden="true">
      <g shapeRendering="crispEdges">
        {/* site */}
        <path d="M348 168H1372L1421 178V212L1350 215L1060 229L710 247L503 256H460L443 247L348 184z" fill="#806252" />
        <path d="M348 184L443 247L460 256.500H503L710 247L1060 229.500L1350 215.500L1421 212M1372 168L1421 178.500" stroke="#000" />
        <path d="M522 168L508 188L479 193L443 247L460 257H485L496 242L511 239L528 238L532 226L511 219L549 168z" fill="#454647" stroke="#000" />
        <path d="M479 193.500l20-2M499 240.500l12-1.500 17-1M511 219l9 4 12 3M532 226L552 201" stroke="#000" />
        <path d="M536 183h2v2h-2z" fill="#e00" />
        <path d="M1029 168H1143L1421 201V212H1380L1293 203H1267L1240 206L1190 198L1183 192L1133 183L1060 172z" fill="#454647" />
        <path d="M1029 168L1060 172L1133 183L1183 192L1190 198L1240 206L1267 203H1293L1380 212H1421M1143 168L1421 201" stroke="#000" />
        <path d="M1027 189.500H1053L1052 206M1128 214L1135 192L1240 194.500M1215 212L1222 197L1252 198.500" stroke="#000" />
        <ellipse cx="1132" cy="189" rx="37" ry="12" stroke="#000" strokeDasharray="1 6" />
        <path d="M1130 188h3v2h-3z" fill="#000" />
        <path d="M1032 173l28 4" stroke="#000" strokeDasharray="1 5" />

        {/* building */}
        <path d="M567 168H1029L1026 203H936V202H587V184H567z" fill="#000" />
        <path d="M541 190L560 168H567L549 187z" fill="#273a1e" stroke="#000" />
        <path d="M550 187L562 171L567 169V181L592 184V187z" fill="#007200" />
        <path d="M563 169h3v2h-3z" fill="#fff" />
        <path d="M546 190L553 186H587V190z" fill="#8b8b8b" />
        <path d="M537 191H587V201H537z" fill="#273a1e" />
        <path d="M537 190.500H587M537.500 190V201.500H587M562 187v4" stroke="#000" />
        <path d="M567 168H633V185L592 184L567 180z" fill="#432e28" />
        <path d="M592 184L613 168" stroke="#000" />
        <path d="M650 184L655 180H683V185z" fill="#3a3c3c" />
        <path d="M640 168v16M643 170v10" stroke="#bbb" strokeDasharray="3 2" />
        <path d="M685 168H722L725 176V185H685z" fill="#432e28" />
        <path d="M685 181.500H725" stroke="#000" />
        <path d="M728 171L745 168H783V178L790 184L800 186H728z" fill="#868686" />
        <path d="M730 169h20" stroke="#fff" strokeWidth="2" />
        <path d="M784 168H802V184L792 182L784 177z" fill="#35231f" />
        <path d="M826 174H890V185H826zM813 173h2v12h-2z" fill="#432e28" />
        <path d="M890 174H907V182L900 185H890z" fill="#35231f" />
        <path d="M912 168H926L918 177L912 181z" fill="#35231f" />
        <path d="M900 187L912 183L926 172L964 179V188H900z" fill="#868686" />
        <path d="M780 186.500h60M846 187.500h34M888 187.500h12" stroke="#8b9aa5" />
        <path d="M840 169.500h10M853 169h6M876 170h5M890 170h5" stroke="#ddd" strokeWidth="2" />
        <path d="M945 168h3v6h-3z" fill="#432e28" />
        <path d="M964 168H1024V179H964z" fill="#505553" />
        <path d="M970 182.500h10M980 181.500h20M1002 181.500h22M966 185.500h10M977 184.500h27M1006 184.500h18M971 187.500h53" stroke="#a68159" />
        <path d="M573 200.500h137" stroke="#007200" />
        <path d="M725 200.500h45" stroke="#777" />
        <path d="M589.500 200v5" stroke="#000" />

        {/* grids and reference lines */}
        <path d="M1352 216L1421 224M348 293.500L1421 319.500M348 543.500L1421 569.500M1076 262L976 660" stroke="#000" />
        <path d="M587 200L441 774" stroke="#666" />
      </g>

      {/* view cube */}
      <defs>
        <radialGradient id="cubeShadow">
          <stop offset=".4" stopColor="#999" stopOpacity=".8" />
          <stop offset="1" stopColor="#fff" stopOpacity="0" />
        </radialGradient>
        <linearGradient id="cubeFront" x1="0" y1="0" x2="0" y2="1">
          <stop offset="0" stopColor="#f6f6f6" />
          <stop offset="1" stopColor="#dcdcdc" />
        </linearGradient>
      </defs>
      <path fillRule="evenodd" d="M1277 305a61 26 0 1 0 122 0a61 26 0 1 0-122 0zM1292 305a46.500 18 0 1 0 93 0a46.500 18 0 1 0-93 0z" fill="#e8e8e8" fillOpacity=".6" stroke="#c3c3c3" strokeDasharray="3 1" />
      <ellipse cx="1342" cy="304" rx="40" ry="12" fill="url(#cubeShadow)" />
      <path d="M1307.500 260L1330 250.500L1367.500 255L1350 265.500z" fill="#f4f4f4" stroke="#999" />
      <path d="M1308 260L1350 265.500L1349.500 310.500L1309 303z" fill="url(#cubeFront)" stroke="#999" />
      <path d="M1350 265.500L1367.500 255.500L1366.500 296L1349.500 310.500z" fill="#e2e2e2" stroke="#999" />
      <g fill="#9a9ea3" fontFamily="Open Sans, sans-serif" fontWeight="700">
        <text x="1314" y="288" fontSize="9" transform="rotate(5 1314 288)">FRONT</text>
        <text x="1353" y="290" fontSize="7" transform="rotate(-38 1353 290)">LEFT</text>
        <text x="1330" y="260" fontSize="6" fontWeight="400">TOP</text>
        <text x="1277" y="304" fontSize="7">W</text>
        <text x="1389" y="308" fontSize="7">E</text>
        <text x="1330" y="330" fontSize="7">S</text>
      </g>
      <path d="M1276 299h14l3 5h-16zM1387 302l12 1-2 5-8-1zM1326 324h14l-3 8h-8z" stroke="#bbb" />

      {/* survey point */}
      <path d="M847.500 676V712" stroke="#8f88ee" strokeWidth="2" />
      <path d="M847.500 663.500L844.500 676.500H850.500z" stroke="#1746b8" strokeWidth="1.500" fill="#8fa9f0" />
      <path d="M848 718L851 707" stroke="#4fae54" strokeWidth="1.500" />
      <ellipse cx="851" cy="704.500" rx="2.500" ry="3.500" transform="rotate(25 851 704.500)" fill="#1d48b0" />
      <path d="M854 720.500L892 721" stroke="#f58a8a" strokeWidth="2" />
      <path d="M893.500 718.500L907 721L893.500 723.500z" stroke="#1746b8" strokeWidth="1.500" fill="#8fa9f0" />
      <path d="M847 709.500L836 726.500H858.500zM843 720h8M847 716v8" stroke="#1746b8" strokeWidth="1.800" />
      <path d="M820.500 688.500v11c0 5 7 5 7 0v-11h-5v9.500c0 2.500 3 2.500 3 0v-7" stroke="#1480c4" strokeWidth="1.200" />
    </svg>
  );
}

function NavigationBar() {
  return (
    <div className="absolute top-[184px] right-0 flex h-[118px] w-9 flex-col items-center rounded-[4px] border-2 border-[#bdbdbd] bg-[#f4f4f4]">
      <button aria-label="Close navigation bar" className="mr-px self-end">
        <Svg w={9}>
          <circle cx="4.500" cy="4.500" r="4" fill="#c2c2c2" stroke="#aaa" />
          <path d="M3 3l3 3M6 3L3 6" stroke="#fff" />
        </Svg>
      </button>
      <Tool label="Steering Wheels" className="mt-2">
        <Svg w={24}>
          <path d="M12 1.500h10.500V12A10.500 10.500 0 1 1 12 1.500z" fill="#eceef1" stroke="#a0a4aa" strokeWidth="1.500" />
          <circle cx="12" cy="12" r="8.500" stroke="#d5d8dc" />
          <circle cx="12" cy="12" r="5" fill="#f6f7f8" stroke="#a0a4aa" strokeWidth="1.500" />
          <path d="M8 16l-3 4M16 16l3 4" stroke="#a0a4aa" />
        </Svg>
      </Tool>
      <Tool label="Steering wheel options" className="mt-2"><Caret className="text-[#888]" /></Tool>
      <span className="mt-[4px] h-px w-[26px] bg-[#bdbdbd]" />
      <Tool label="Zoom region" className="mt-2">
        <Svg>
          <path d="M1.500 1.500h10v10h-10z" fill="#b9d9ab" stroke="#8fb583" />
          <circle cx="11" cy="10" r="3.500" fill="#eef2f5" stroke="#999" />
          <path d="M13.500 13l3 3" stroke="#999" strokeWidth="2" />
        </Svg>
      </Tool>
      <Tool label="Zoom options" className="mt-[9px]"><Caret className="text-[#888]" /></Tool>
      <button aria-label="Navigation bar options" className="mt-auto mr-px mb-px self-end">
        <Svg w={9}>
          <circle cx="4.500" cy="4.500" r="4" fill="#d8d8d8" stroke="#aaa" />
          <path d="M2.500 3.500h4M2.500 5.500h4" stroke="#999" />
        </Svg>
      </button>
    </div>
  );
}

function Viewport() {
  return (
    <main className="flex min-w-0 flex-1 border-t-2 border-l-2 border-[#7c7c7c] bg-white">
      <div className="relative min-w-0 flex-1 overflow-hidden">
        <Scene />
        <div className="absolute top-2 right-[4px] flex items-end gap-[6px]">
          <button aria-label="Minimize view">
            <Svg w={12}><path d="M.5 7.500h11v3H.5z" fill="#fff" stroke="#3f4452" /></Svg>
          </button>
          <button aria-label="Restore view">
            <Svg w={12}>
              <path d="M3.500 1.500h7v7h-7z" fill="#fff" stroke="#3f4452" />
              <path d="M1.500 3.500h7v7h-7z" fill="#fff" stroke="#3f4452" />
              <path d="M4 6h2v2H4z" fill="#3f4452" stroke="none" />
            </Svg>
          </button>
          <button aria-label="Close view">
            <Svg w={12}>
              <path d="M1.500 1.500l9 9M10.500 1.500l-9 9" stroke="#3f4452" strokeWidth="4" />
              <path d="M1.500 1.500l9 9M10.500 1.500l-9 9" stroke="#fff" strokeWidth="2" />
            </Svg>
          </button>
        </div>
        <NavigationBar />
        <div className="absolute top-[480px] left-[549px] font-['Liberation_Sans',sans-serif] text-[11px] leading-[14px] whitespace-pre text-[#4a4a4a]">
          <p className="text-[#1746b8]">Survey Point - Internal</p>
          <p>Shared Site:</p>
          <p>N/S   472052707.0</p>
          <p>E/W   508176494.0</p>
          <p>Elev   -39245.0</p>
        </div>
      </div>
      <div className="mr-[2px] flex w-[17px] shrink-0 flex-col items-center bg-[#f0f0f0]">
        <Tool label="Scroll up" className="h-[18px]">
          <Svg w={9} h={6}><path d="M1 5l3.500-3.500L8 5" stroke="#555" strokeWidth="2" /></Svg>
        </Tool>
        <span className="mt-[298px] h-[17px] w-[15px] bg-[#cdcdcd]" />
      </div>
    </main>
  );
}

export default function App() {
  return (
    <div className="flex h-screen flex-col overflow-hidden bg-[#f0f0f0] font-['Open_Sans','Noto_Sans',sans-serif] text-[11px]">
      <header className="relative shrink-0">
        <TitleBar />
        <TabRow />
        <button aria-label="Application menu" className="absolute top-0 left-0 flex h-[41px] w-[41px] items-center justify-center border border-black bg-linear-to-b from-[#c9c9c9] to-[#8c8c8c]">
          <Svg w={27} h={39}>
            <defs>
              <linearGradient id="logoR" x1="0" y1="0" x2="0" y2="1">
                <stop offset="0" stopColor="#3f9be0" />
                <stop offset="1" stopColor="#17508f" />
              </linearGradient>
            </defs>
            <text x="3" y="31" fontSize="33" fontWeight="700" fill="url(#logoR)" stroke="none" fontFamily="Liberation Sans, sans-serif">R</text>
          </Svg>
          <Svg w={7} h={4}><path d="M0 0h7L3.500 4z" fill="#333" stroke="none" /></Svg>
        </button>
        <div className="bg-[#a0a0a0] px-px">
          <Ribbon />
        </div>
      </header>
      <div className="flex h-[27px] shrink-0 items-center bg-[#d8e3d0] pt-[3px] pl-[9px] text-[11px] text-[#999]">
        Modify | Survey Point
      </div>
      <div className="flex min-h-0 flex-1">
        <aside className="mr-1 flex w-[342px] shrink-0 flex-col">
          <PropertiesPalette />
          <ProjectBrowser />
        </aside>
        <Viewport />
      </div>
    </div>
  );
}
